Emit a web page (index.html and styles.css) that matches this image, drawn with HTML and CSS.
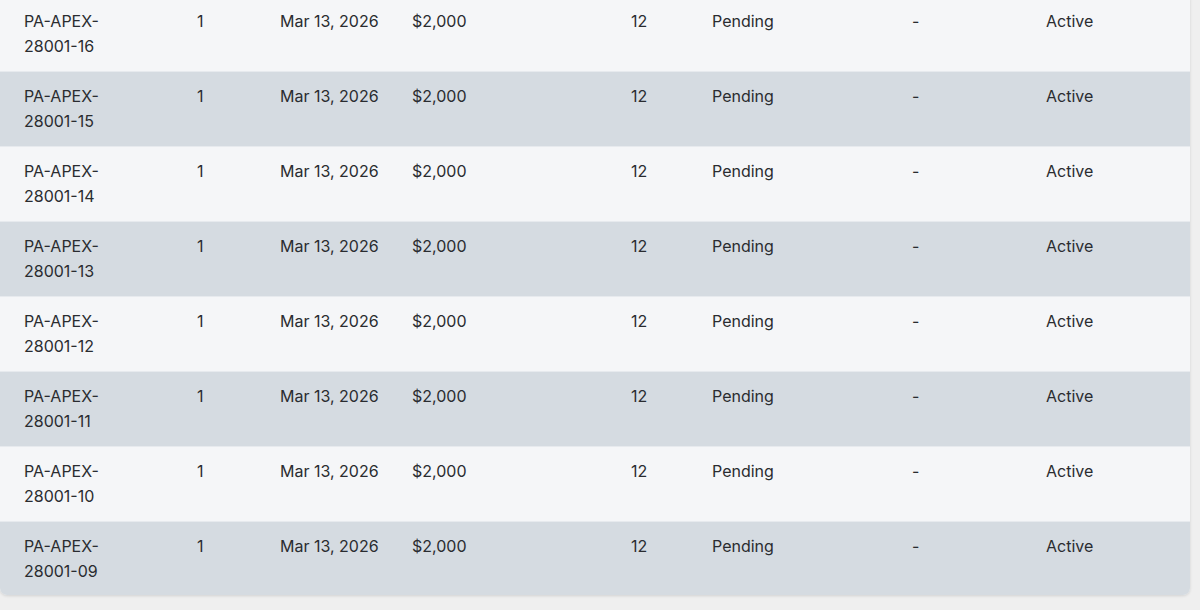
FILE: index.html
```html
<!DOCTYPE html>
<html>
<head>
<meta charset="utf-8">
<link rel="stylesheet" href="styles.css">
</head>
<body>
<div class="page">
  <div class="card">
    <div class="row"><div class="c id">PA-APEX-28001-16</div><div class="c">1</div><div class="c">Mar 13, 2026</div><div class="c">$2,000</div><div class="c">12</div><div class="c">Pending</div><div class="c">-</div><div class="c">Active</div></div>
    <div class="row alt"><div class="c id">PA-APEX-28001-15</div><div class="c">1</div><div class="c">Mar 13, 2026</div><div class="c">$2,000</div><div class="c">12</div><div class="c">Pending</div><div class="c">-</div><div class="c">Active</div></div>
    <div class="row"><div class="c id">PA-APEX-28001-14</div><div class="c">1</div><div class="c">Mar 13, 2026</div><div class="c">$2,000</div><div class="c">12</div><div class="c">Pending</div><div class="c">-</div><div class="c">Active</div></div>
    <div class="row alt"><div class="c id">PA-APEX-28001-13</div><div class="c">1</div><div class="c">Mar 13, 2026</div><div class="c">$2,000</div><div class="c">12</div><div class="c">Pending</div><div class="c">-</div><div class="c">Active</div></div>
    <div class="row"><div class="c id">PA-APEX-28001-12</div><div class="c">1</div><div class="c">Mar 13, 2026</div><div class="c">$2,000</div><div class="c">12</div><div class="c">Pending</div><div class="c">-</div><div class="c">Active</div></div>
    <div class="row alt"><div class="c id">PA-APEX-28001-11</div><div class="c">1</div><div class="c">Mar 13, 2026</div><div class="c">$2,000</div><div class="c">12</div><div class="c">Pending</div><div class="c">-</div><div class="c">Active</div></div>
    <div class="row"><div class="c id">PA-APEX-28001-10</div><div class="c">1</div><div class="c">Mar 13, 2026</div><div class="c">$2,000</div><div class="c">12</div><div class="c">Pending</div><div class="c">-</div><div class="c">Active</div></div>
    <div class="row alt"><div class="c id">PA-APEX-28001-09</div><div class="c">1</div><div class="c">Mar 13, 2026</div><div class="c">$2,000</div><div class="c">12</div><div class="c">Pending</div><div class="c">-</div><div class="c">Active</div></div>
  </div>
</div>
</body>
</html>
```
FILE: styles.css
```css
html, body {
  margin: 0;
  padding: 0;
  background: #efefef;
  height: 100%;
  overflow: hidden;
}
.page {
  width: 1190px;
  margin-top: -3px;
  font-family: Inter, "Noto Sans", sans-serif;
  font-size: 16px;
  line-height: 25px;
  color: #2a2c30;
}
.card {
  background: #f5f6f8;
  border-radius: 0 0 7px 7px;
  overflow: hidden;
  box-shadow: 0 1px 3px rgba(0, 0, 0, 0.12);
}
.row {
  display: grid;
  grid-template-columns: 173px 83px 132px 219px 81px 200px 134px 156px;
  padding-left: 12px;
  height: 75px;
  box-sizing: border-box;
  border-bottom: 1px solid #e7eaee;
  background: #f5f6f8;
}
.row.alt {
  background: #d5dbe1;
}
.row:last-child {
  border-bottom: none;
  height: 73px;
}
.c {
  padding: 12px 12px 0 12px;
}
.c.id {
  padding-right: 60px;
}
```
